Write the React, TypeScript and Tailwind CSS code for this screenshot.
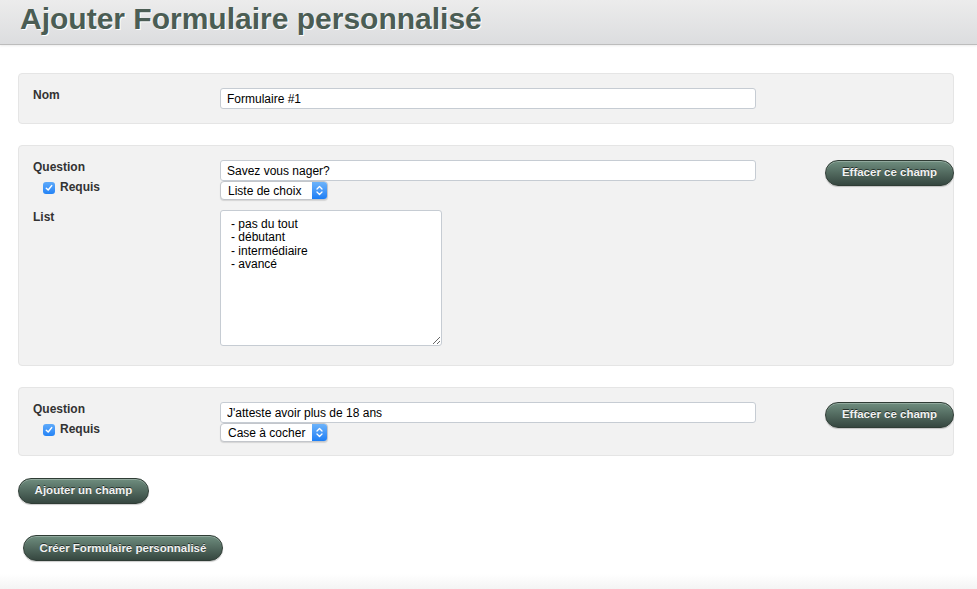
import { useState } from "react";

const FONT = "font-['Liberation_Sans',Arial,sans-serif]";

function GreenButton({ label, className = "" }: { label: string; className?: string }) {
  return (
    <button
      type="button"
      className={`h-[26px] rounded-full border border-[#2f3c35] bg-gradient-to-b from-[#6f8e7f] to-[#364740] text-[11.5px] font-bold text-[#f2f2f2] shadow-[inset_0_1px_0_rgba(255,255,255,0.25),0_1px_1px_rgba(0,0,0,0.2)] [text-shadow:0_-1px_0_rgba(0,0,0,0.6)] ${className}`}
    >
      {label}
    </button>
  );
}

function MacSelect({ value, width }: { value: string; width: string }) {
  return (
    <div
      className={`flex h-[19px] ${width} items-stretch overflow-hidden rounded-[4px] border border-[#c3c6cb] bg-white shadow-[0_1px_1px_rgba(0,0,0,0.12)]`}
    >
      <span className="flex flex-1 items-center whitespace-nowrap pl-[7px] text-[12px] leading-none text-black">
        {value}
      </span>
      <span className="flex w-[15px] items-center justify-center bg-gradient-to-b from-[#6cb3fa] to-[#1a7ef5]">
        <svg width="7" height="11" viewBox="0 0 7 11" fill="none">
          <path d="M1 4 L3.5 1.5 L6 4" stroke="white" strokeWidth="1.3" strokeLinecap="round" strokeLinejoin="round" />
          <path d="M1 7 L3.5 9.5 L6 7" stroke="white" strokeWidth="1.3" strokeLinecap="round" strokeLinejoin="round" />
        </svg>
      </span>
    </div>
  );
}

function Checkbox() {
  return (
    <span className="flex h-[12px] w-[12px] items-center justify-center rounded-[3px] bg-gradient-to-b from-[#5eaafa] to-[#2283f6]">
      <svg width="8" height="8" viewBox="0 0 8 8" fill="none">
        <path d="M1.3 4.2 L3.2 6 L6.7 1.6" stroke="white" strokeWidth="1.5" strokeLinecap="round" strokeLinejoin="round" />
      </svg>
    </span>
  );
}

function TextInput({ value }: { value: string }) {
  const [v, setV] = useState(value);
  return (
    <input
      className="h-[21px] w-[536px] rounded-[3px] border border-[#c6ccd3] bg-white px-[6px] text-[12px] text-black outline-none"
      value={v}
      onChange={(e) => setV(e.target.value)}
    />
  );
}

function QuestionPanel({
  question,
  type,
  list,
  pb,
}: {
  question: string;
  type: string;
  list?: string;
  pb: string;
}) {
  return (
    <div className={`flex items-start rounded-[4px] border border-[#e5e5e5] bg-[#f2f2f2] pl-[14px] pt-[14px] ${pb}`}>
      <div className="flex flex-col">
        <div className="flex">
          <div className="w-[187px]">
            <div className="text-[12px] font-bold leading-[15px] text-[#333]">Question</div>
            <label className="mt-[5px] ml-[10px] flex items-center gap-[5px] text-[12px] font-bold leading-[15px] text-[#333]">
              <Checkbox />
              Requis
            </label>
          </div>
          <div className="flex flex-col">
            <TextInput value={question} />
            <MacSelect value={type} width="w-[108px]" />
          </div>
        </div>
        {list && (
          <div className="mt-[10px] flex">
            <div className="w-[187px] text-[12px] font-bold leading-[15px] text-[#333]">List</div>
            <textarea
              className="h-[136px] w-[222px] rounded-[3px] border border-[#c6ccd3] bg-white px-[10px] py-[7px] text-[12px] leading-[13.3px] text-black outline-none"
              defaultValue={list}
            />
          </div>
        )}
      </div>
      <GreenButton label="Effacer ce champ" className="ml-auto -mr-px w-[129px]" />
    </div>
  );
}

export default function App() {
  return (
    <div className={`${FONT} min-h-[589px] bg-white`}>
      <header className="h-[45px] border-b border-[#bcbcbc] bg-gradient-to-b from-[#ececec] to-[#dcdddf] pl-[20px] shadow-[0_1px_2px_rgba(0,0,0,0.08)]">
        <h1 className="text-[30px] font-bold leading-[38px] text-[#4b5d54] [text-shadow:1px_1px_0_#ffffff]">
          Ajouter Formulaire personnalisé
        </h1>
      </header>

      <main className="flex flex-col px-[18px] pt-[28px]">
        <div className="mr-[5px] flex items-start rounded-[4px] border border-[#e5e5e5] bg-[#f2f2f2] px-[14px] py-[14px]">
          <div className="w-[187px] text-[12px] font-bold leading-[15px] text-[#333]">Nom</div>
          <TextInput value="Formulaire #1" />
        </div>

        <div className="mt-[21px] mr-[5px]">
          <QuestionPanel
            question="Savez vous nager?"
            type="Liste de choix"
            list={"- pas du tout\n- débutant\n- intermédiaire\n- avancé"}
            pb="pb-[19px]"
          />
        </div>

        <div className="mt-[21px] mr-[5px]">
          <QuestionPanel question="J'atteste avoir plus de 18 ans" type="Case à cocher" pb="pb-[13px]" />
        </div>

        <div className="mt-[21px]">
          <GreenButton label="Ajouter un champ" className="w-[131px]" />
        </div>

        <div className="mt-[31px] pl-[5px]">
          <GreenButton label="Créer Formulaire personnalisé" className="w-[200px]" />
        </div>
      </main>

      <div className="mt-[13px] h-[16px] bg-gradient-to-b from-white to-[#f3f3f3]" />
    </div>
  );
}
